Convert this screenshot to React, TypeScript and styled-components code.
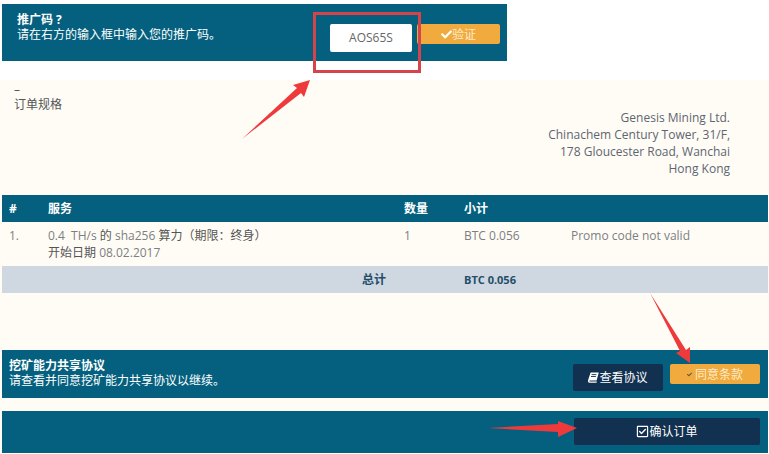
import { createGlobalStyle } from 'styled-components';
import styled from 'styled-components';
import { FaCheck, FaRegCheckSquare } from 'react-icons/fa';

const GlobalStyle = createGlobalStyle`
	html, body {
		margin: 0;
		padding: 0;
		background: #fff;
	}
	body {
		font-family: 'Open Sans', 'Noto Sans CJK SC', sans-serif;
		font-size: 12px;
		line-height: 17px;
	}
`;

const Page = styled.div`
	position: relative;
	width: 769px;
	height: 454px;
	padding-top: 4px;
	box-sizing: border-box;
	overflow: hidden;
`;

const PromoBar = styled.div`
	display: flex;
	align-items: flex-start;
	width: 505px;
	height: 57px;
	margin-left: 2px;
	padding: 8px 7px 0 15px;
	box-sizing: border-box;
	background: #04607e;
	color: #fff;
`;

const BarText = styled.div`
	flex: 1;
	line-height: 15px;

	strong {
		display: block;
		font-weight: 700;
	}
`;

const PromoInput = styled.div`
	width: 82px;
	height: 28px;
	margin-top: 12px;
	border-radius: 2px;
	background: #fff;
	color: #666;
	font-size: 12px;
	line-height: 28px;
	text-align: center;
`;

const Button = styled.div<{ $tone: 'orange' | 'navy'; $width: number; $height: number }>`
	display: flex;
	align-items: center;
	justify-content: center;
	width: ${(p) => p.$width}px;
	height: ${(p) => p.$height}px;
	border-radius: 2px;
	background: ${(p) => (p.$tone === 'orange' ? '#f0aa3d' : '#12304f')};
	color: ${(p) => (p.$tone === 'orange' ? '#fdeccc' : '#fff')};
	font-size: 12px;
	svg {
		flex: none;
	}
`;

const VerifyButton = styled(Button)`
	margin: 12px 0 0 5px;
`;

const Sheet = styled.div`
	margin-top: 19px;
	height: 374px;
	background: #fffcf6;
	display: flex;
	flex-direction: column;
`;

const SpecRow = styled.div`
	display: flex;
	justify-content: space-between;
	height: 115px;
	padding: 0 39px 0 14px;
	color: #555;
`;

const SpecTitle = styled.div`
	padding-top: 2px;
	line-height: 15px;
`;

const Address = styled.div`
	padding-top: 29px;
	color: #5d6670;
	text-align: right;
`;

const TableRow = styled.div<{ $kind: 'head' | 'body' | 'total' }>`
	display: grid;
	grid-template-columns: 39px 356px 60px 107px 1fr;
	margin: 0 1px 0 2px;
	padding-left: 7px;
	height: ${(p) => (p.$kind === 'body' ? 44 : 27)}px;
	align-items: ${(p) => (p.$kind === 'body' ? 'start' : 'center')};
	background: ${(p) =>
		p.$kind === 'head' ? '#04607e' : p.$kind === 'total' ? '#cfd7e0' : 'transparent'};
	color: ${(p) => (p.$kind === 'head' ? '#fff' : p.$kind === 'total' ? '#1f4e6b' : '#7c7f82')};
	font-weight: ${(p) => (p.$kind === 'body' ? 400 : 700)};
	padding-top: ${(p) => (p.$kind === 'body' ? 5 : 0)}px;
	box-sizing: border-box;
	font-size: 12px;
`;

const TotalLabel = styled.div`
	grid-column: 2;
	text-align: right;
	padding-right: 18px;
`;

const TotalValue = styled.div`
	grid-column: 4;
	font-size: 11px;
`;

const CjkDark = styled.span`
	color: #555;
`;

const ActionBar = styled.div<{ $height: number; $offset: number }>`
	display: flex;
	justify-content: space-between;
	align-items: flex-start;
	margin: ${(p) => p.$offset}px 1px 0 2px;
	height: ${(p) => p.$height}px;
	padding: 8px 8px 0 7px;
	box-sizing: border-box;
	background: #04607e;
	color: #fff;
`;

const ActionButtons = styled.div`
	display: flex;
	align-items: flex-start;
	gap: 7px;
	padding-top: 6px;
`;

const ConfirmBar = styled(ActionBar)`
	justify-content: flex-end;
	padding-top: 7px;
`;

const Annotations = styled.svg`
	position: absolute;
	inset: 0;
	pointer-events: none;
`;

function BookIcon() {
	return (
		<svg width='11' height='11' viewBox='0 0 11 11'>
			<path d='M2.6 0.5 H10.8 L8.6 8.4 H1.9 C1.2 8.4 1.2 9.6 1.9 9.6 H8.9 L8.5 10.8 H1.4 C-0.1 10.8 -0.2 9 0.3 7.6 Z' fill='#fff' />
			<path d='M3.6 2.6 H8.4 M3 4.5 H7.9' stroke='#12304f' strokeWidth='0.9' />
		</svg>
	);
}

export default function App() {
	return (
		<Page>
			<GlobalStyle />
			<PromoBar>
				<BarText>
					<strong>推广码 ?</strong>
					请在右方的输入框中输入您的推广码。
				</BarText>
				<PromoInput>AOS65S</PromoInput>
				<VerifyButton $tone='orange' $width={83} $height={20}>
					<FaCheck size={11} color='#fff' />
					验证
				</VerifyButton>
			</PromoBar>
			<Sheet>
				<SpecRow>
					<SpecTitle>
						–
						<br />
						订单规格
					</SpecTitle>
					<Address>
						Genesis Mining Ltd.
						<br />
						Chinachem Century Tower, 31/F,
						<br />
						178 Gloucester Road, Wanchai
						<br />
						Hong Kong
					</Address>
				</SpecRow>
				<TableRow $kind='head'>
					<div>#</div>
					<div>服务</div>
					<div>数量</div>
					<div>小计</div>
				</TableRow>
				<TableRow $kind='body'>
					<div>1.</div>
					<div>
						0.4&nbsp; TH/s <CjkDark>的</CjkDark> sha256 <CjkDark>算力（期限：终身）</CjkDark>
						<br />
						<CjkDark>开始日期</CjkDark> 08.02.2017
					</div>
					<div>1</div>
					<div>BTC 0.056</div>
					<div>Promo code not valid</div>
				</TableRow>
				<TableRow $kind='total'>
					<TotalLabel>总计</TotalLabel>
					<TotalValue>BTC 0.056</TotalValue>
				</TableRow>
				<ActionBar $height={48} $offset={57}>
					<BarText>
						<strong>挖矿能力共享协议</strong>
						请查看并同意挖矿能力共享协议以继续。
					</BarText>
					<ActionButtons>
						<Button $tone='navy' $width={90} $height={27}>
							<BookIcon />
							查看协议
						</Button>
						<Button $tone='orange' $width={90} $height={20}>
							<FaCheck size={5} color='#555' />
							&nbsp;同意条款
						</Button>
					</ActionButtons>
				</ActionBar>
				<ConfirmBar $height={42} $offset={13}>
					<Button $tone='navy' $width={186} $height={27}>
						<FaRegCheckSquare size={13} />
						确认订单
					</Button>
				</ConfirmBar>
			</Sheet>
			<Annotations width='769' height='454' viewBox='0 0 769 454'>
				<rect x='314.5' y='13.5' width='105' height='58' fill='none' stroke='#d5434b' strokeWidth='3' />
				<path d='M242 139 L297 88 L293 85 L310 80 L304 97 L301 93 Z' fill='#ef3a3c' />
				<path d='M650 293 L686 350 L690 347 L690 363 L676 353 L680 351 Z' fill='#ef3a3c' />
				<path d='M488 428 L558 424 L558 421 L577 428 L558 437 L558 432 Z' fill='#ef3a3c' />
			</Annotations>
		</Page>
	);
}
